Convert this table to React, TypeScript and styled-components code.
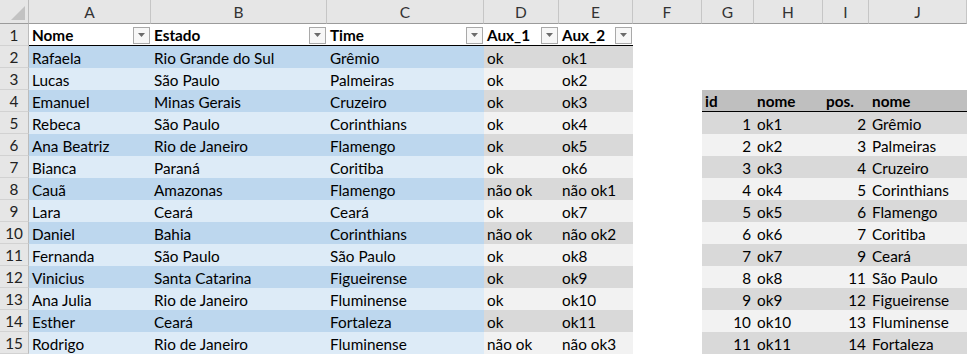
import React from "react";
import styled, { createGlobalStyle } from "styled-components";

const GlobalStyle = createGlobalStyle`
    html, body {
        margin: 0;
        padding: 0;
        background: #ffffff;
    }
    body {
        font-family: Lato, "Liberation Sans", Arial, sans-serif;
        overflow: hidden;
    }
`;

const BLUE_DARK = "#bdd7ee";
const BLUE_LIGHT = "#ddebf7";
const GRAY_DARK = "#d9d9d9";
const GRAY_LIGHT = "#f2f2f2";
const GRAY_HEAD = "#bfbfbf";

const Sheet = styled.div`
    display: grid;
    grid-template-columns: 29px 122px 176px 157px 75px 74px 69px 52px 69px 46px 1fr;
    grid-template-rows: 24px repeat(15, 22px);
    width: 967px;
    height: 354px;
    font-size: 15.3px;
    color: #000;
`;

const Corner = styled.div`
    background: #e6e6e6;
    border-right: 1px solid #bcbcbc;
    border-bottom: 1px solid #9b9b9b;
    display: flex;
    align-items: flex-end;
    justify-content: flex-end;
    padding: 0 3px 3px 0;
    box-sizing: border-box;
`;

const ColHead = styled.div`
    background: #e6e6e6;
    border-right: 1px solid #c6c6c6;
    border-bottom: 1px solid #9b9b9b;
    box-sizing: border-box;
    display: flex;
    align-items: center;
    justify-content: center;
    color: #333;
    font-size: 15.5px;
    padding-top: 1px;
`;

const RowHead = styled.div`
    background: #e6e6e6;
    border-right: 1px solid #bcbcbc;
    border-bottom: 1px solid #d2d2d2;
    box-sizing: border-box;
    display: flex;
    align-items: center;
    justify-content: center;
    color: #222;
`;

const Cell = styled.div<{ $bg?: string; $bold?: boolean; $right?: boolean; $line?: boolean }>`
    background: ${(p) => p.$bg || "transparent"};
    font-weight: ${(p) => (p.$bold ? 700 : 400)};
    border-bottom: ${(p) => (p.$line ? "1px solid #000" : "none")};
    box-sizing: border-box;
    display: flex;
    align-items: center;
    justify-content: ${(p) => (p.$right ? "flex-end" : "space-between")};
    padding: 1px 3px 0 3px;
    white-space: nowrap;
    overflow: hidden;
`;

const FilterButton = styled.span`
    width: 17px;
    height: 17px;
    box-sizing: border-box;
    border: 1px solid #a9a9a9;
    background: #f7f7f7;
    display: flex;
    align-items: center;
    justify-content: center;
    margin-right: -2px;
    flex-shrink: 0;
`;

const Arrow = () => (
    <svg width="7" height="4" viewBox="0 0 7 4">
        <polygon points="0,0 7,0 3.5,4" fill="#6b6b6b" />
    </svg>
);

const CornerMark = () => (
    <svg width="14" height="14" viewBox="0 0 14 14">
        <polygon points="14,0 14,14 0,14" fill="#c2c2c2" />
    </svg>
);

const letters = ["A", "B", "C", "D", "E", "F", "G", "H", "I", "J"];

const people: [string, string, string, string, string][] = [
    ["Rafaela", "Rio Grande do Sul", "Grêmio", "ok", "ok1"],
    ["Lucas", "São Paulo", "Palmeiras", "ok", "ok2"],
    ["Emanuel", "Minas Gerais", "Cruzeiro", "ok", "ok3"],
    ["Rebeca", "São Paulo", "Corinthians", "ok", "ok4"],
    ["Ana Beatriz", "Rio de Janeiro", "Flamengo", "ok", "ok5"],
    ["Bianca", "Paraná", "Coritiba", "ok", "ok6"],
    ["Cauã", "Amazonas", "Flamengo", "não ok", "não ok1"],
    ["Lara", "Ceará", "Ceará", "ok", "ok7"],
    ["Daniel", "Bahia", "Corinthians", "não ok", "não ok2"],
    ["Fernanda", "São Paulo", "São Paulo", "ok", "ok8"],
    ["Vinicius", "Santa Catarina", "Figueirense", "ok", "ok9"],
    ["Ana Julia", "Rio de Janeiro", "Fluminense", "ok", "ok10"],
    ["Esther", "Ceará", "Fortaleza", "ok", "ok11"],
    ["Rodrigo", "Rio de Janeiro", "Fluminense", "não ok", "não ok3"],
];

const lookup: [number, string, number, string][] = [
    [1, "ok1", 2, "Grêmio"],
    [2, "ok2", 3, "Palmeiras"],
    [3, "ok3", 4, "Cruzeiro"],
    [4, "ok4", 5, "Corinthians"],
    [5, "ok5", 6, "Flamengo"],
    [6, "ok6", 7, "Coritiba"],
    [7, "ok7", 9, "Ceará"],
    [8, "ok8", 11, "São Paulo"],
    [9, "ok9", 12, "Figueirense"],
    [10, "ok10", 13, "Fluminense"],
    [11, "ok11", 14, "Fortaleza"],
];

const mainHeaders = ["Nome", "Estado", "Time", "Aux_1", "Aux_2"];
const sideHeaders = ["id", "nome", "pos.", "nome"];

const App = () => {
    const rows: React.ReactNode[] = [];

    for (let r = 1; r <= 15; r++) {
        rows.push(<RowHead key={`rh${r}`}>{r}</RowHead>);

        // columns A-E: main table
        if (r === 1) {
            mainHeaders.forEach((h) =>
                rows.push(
                    <Cell key={`m1${h}`} $bold $line>
                        {h}
                        <FilterButton>
                            <Arrow />
                        </FilterButton>
                    </Cell>
                )
            );
        } else {
            const p = people[r - 2];
            const dark = r % 2 === 0;
            p.forEach((v, i) =>
                rows.push(
                    <Cell
                        key={`m${r}${i}`}
                        $bg={i < 3 ? (dark ? BLUE_DARK : BLUE_LIGHT) : dark ? GRAY_DARK : GRAY_LIGHT}
                    >
                        {v}
                    </Cell>
                )
            );
        }

        // column F: empty
        rows.push(<Cell key={`f${r}`} />);

        // columns G-J: lookup table
        if (r < 4) {
            for (let i = 0; i < 4; i++) rows.push(<Cell key={`e${r}${i}`} />);
        } else if (r === 4) {
            sideHeaders.forEach((h, i) =>
                rows.push(
                    <Cell key={`sh${i}`} $bold $line $bg={GRAY_HEAD}>
                        {h}
                    </Cell>
                )
            );
        } else {
            const l = lookup[r - 5];
            const bg = r % 2 === 1 ? GRAY_DARK : GRAY_LIGHT;
            rows.push(
                <Cell key={`s${r}0`} $bg={bg} $right>
                    {l[0]}
                </Cell>,
                <Cell key={`s${r}1`} $bg={bg}>
                    {l[1]}
                </Cell>,
                <Cell key={`s${r}2`} $bg={bg} $right>
                    {l[2]}
                </Cell>,
                <Cell key={`s${r}3`} $bg={bg}>
                    {l[3]}
                </Cell>
            );
        }
    }

    return (
        <>
            <GlobalStyle />
            <Sheet>
                <Corner>
                    <CornerMark />
                </Corner>
                {letters.map((l) => (
                    <ColHead key={l}>{l}</ColHead>
                ))}
                {rows}
            </Sheet>
        </>
    );
};

export default App;
